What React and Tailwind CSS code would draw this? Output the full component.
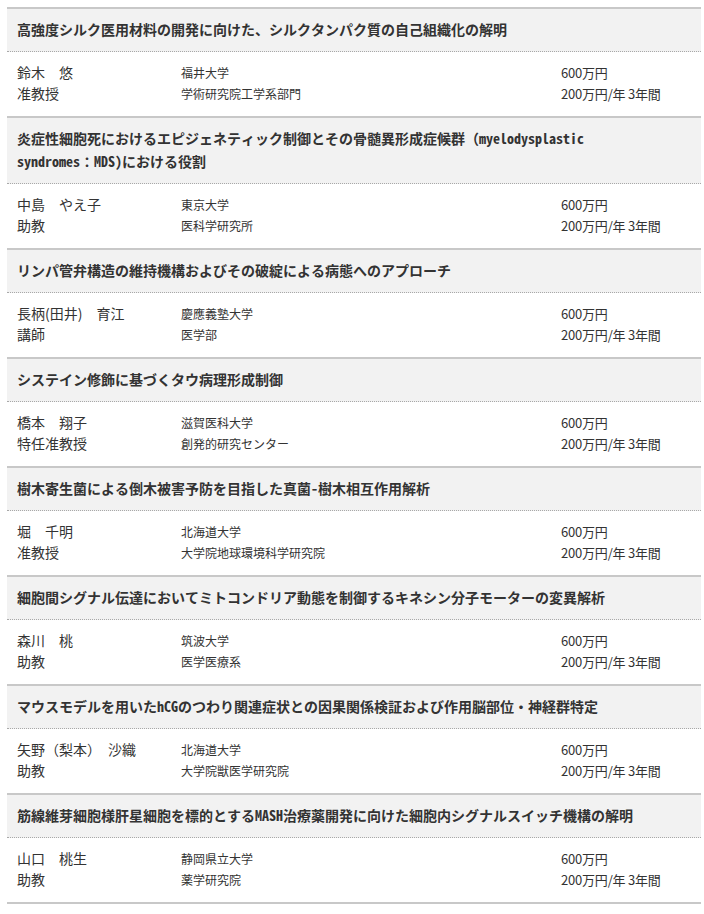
import React from "react";

const GRANTS = [
  {
    title: ["高強度シルク医用材料の開発に向けた、シルクタンパク質の自己組織化の解明"],
    name: "鈴木　悠",
    position: "准教授",
    university: "福井大学",
    department: "学術研究院工学系部門",
  },
  {
    title: [
      "炎症性細胞死におけるエピジェネティック制御とその骨髄異形成症候群（myelodysplastic",
      "syndromes：MDS)における役割",
    ],
    name: "中島　やえ子",
    position: "助教",
    university: "東京大学",
    department: "医科学研究所",
  },
  {
    title: ["リンパ管弁構造の維持機構およびその破綻による病態へのアプローチ"],
    name: "長柄(田井)　育江",
    position: "講師",
    university: "慶應義塾大学",
    department: "医学部",
  },
  {
    title: ["システイン修飾に基づくタウ病理形成制御"],
    name: "橋本　翔子",
    position: "特任准教授",
    university: "滋賀医科大学",
    department: "創発的研究センター",
  },
  {
    title: ["樹木寄生菌による倒木被害予防を目指した真菌-樹木相互作用解析"],
    name: "堀　千明",
    position: "准教授",
    university: "北海道大学",
    department: "大学院地球環境科学研究院",
  },
  {
    title: ["細胞間シグナル伝達においてミトコンドリア動態を制御するキネシン分子モーターの変異解析"],
    name: "森川　桃",
    position: "助教",
    university: "筑波大学",
    department: "医学医療系",
  },
  {
    title: ["マウスモデルを用いたhCGのつわり関連症状との因果関係検証および作用脳部位・神経群特定"],
    name: "矢野（梨本）　沙織",
    position: "助教",
    university: "北海道大学",
    department: "大学院獣医学研究院",
  },
  {
    title: ["筋線維芽細胞様肝星細胞を標的とするMASH治療薬開発に向けた細胞内シグナルスイッチ機構の解明"],
    name: "山口　桃生",
    position: "助教",
    university: "静岡県立大学",
    department: "薬学研究院",
  },
];

const GrantItem = ({ item }) => (
  <div className="border-t-2 border-[#c8c8c8]">
    {/* Title */}
    <div className="bg-[#f2f2f2] px-[10px] pt-[9px] pb-[10px] border-b border-dotted border-[#a8a8a8]">
      <h3 className="text-[14px] leading-[23px] font-bold text-[#333] [font-family:'Noto_Sans_Mono_CJK_JP','Noto_Sans_CJK_JP',sans-serif]">
        {item.title.map((line, i) => (
          <React.Fragment key={i}>
            {i > 0 && <br />}
            {line}
          </React.Fragment>
        ))}
      </h3>
    </div>

    {/* Researcher / institution / amount */}
    <div className="grid grid-cols-[164px_380px_1fr] px-[10px] pt-[10px] pb-[12px] text-[#333] leading-[21px]">
      <div className="text-[14px]">
        <p>{item.name}</p>
        <p>{item.position}</p>
      </div>
      <div className="text-[12px]">
        <p>{item.university}</p>
        <p>{item.department}</p>
      </div>
      <div className="text-[13px] tracking-[-0.2px]">
        <p>600万円</p>
        <p>200万円/年 3年間</p>
      </div>
    </div>
  </div>
);

export default function App() {
  return (
    <div className="bg-white min-h-screen pt-[7px] pl-[7px] pr-[3px] [font-family:'Noto_Sans_CJK_JP','Noto_Sans',sans-serif]">
      <div className="border-b-2 border-[#c8c8c8]">
        {GRANTS.map((item, index) => (
          <GrantItem key={index} item={item} />
        ))}
      </div>
    </div>
  );
}
